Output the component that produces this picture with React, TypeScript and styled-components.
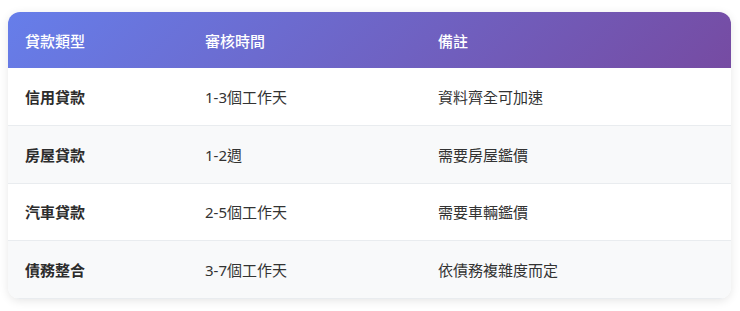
import React from "react";
import styled, { createGlobalStyle } from "styled-components";

const Global = createGlobalStyle`
  html, body { margin: 0; padding: 0; background: #ffffff; }
  body { font-family: "Noto Sans", "Noto Sans CJK TC", sans-serif; }
  *, *::before, *::after { box-sizing: border-box; }
`;

const Page = styled.div`
  padding: 12px 9px 12px 8px;
`;

const Card = styled.div`
  border-radius: 12px;
  overflow: hidden;
  box-shadow: 0 2px 10px rgba(0, 0, 0, 0.1);
  background: #fff;
`;

const Table = styled.table`
  width: 100%;
  border-collapse: collapse;
  table-layout: fixed;
  font-size: 15px;
`;

const HeadRow = styled.tr`
  background: linear-gradient(135deg, #667eea 0%, #764ba2 100%);
`;

const Th = styled.th<{ $w?: number }>`
  text-align: left;
  color: #fff;
  font-weight: 500;
  padding: 0 17px;
  height: 56px;
  width: ${(p) => (p.$w ? `${p.$w}px` : "auto")};
`;

const Row = styled.tr<{ $alt: boolean }>`
  background: ${(p) => (p.$alt ? "#f8f9fa" : "#ffffff")};
  border-bottom: 1px solid #e9ecef;
`;

const Td = styled.td<{ $strong?: boolean }>`
  padding: 0 17px;
  height: 57.5px;
  color: ${(p) => (p.$strong ? "#2c2c2c" : "#333")};
  font-weight: ${(p) => (p.$strong ? 600 : 400)};
`;

const rows = [
  ["信用貸款", "1-3個工作天", "資料齊全可加速"],
  ["房屋貸款", "1-2週", "需要房屋鑑價"],
  ["汽車貸款", "2-5個工作天", "需要車輛鑑價"],
  ["債務整合", "3-7個工作天", "依債務複雜度而定"],
];

export default function App() {
  return (
    <>
      <Global />
      <Page>
        <Card>
          <Table>
            <thead>
              <HeadRow>
                <Th $w={180}>貸款類型</Th>
                <Th $w={233}>審核時間</Th>
                <Th>備註</Th>
              </HeadRow>
            </thead>
            <tbody>
              {rows.map((r, i) => (
                <Row key={r[0]} $alt={i % 2 === 1}>
                  <Td $strong>{r[0]}</Td>
                  <Td>{r[1]}</Td>
                  <Td>{r[2]}</Td>
                </Row>
              ))}
            </tbody>
          </Table>
        </Card>
      </Page>
    </>
  );
}
